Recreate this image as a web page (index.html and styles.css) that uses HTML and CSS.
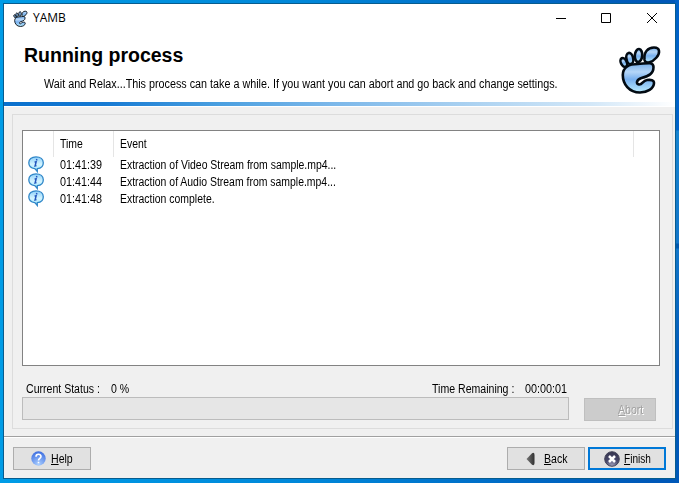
FILE: index.html
```html
<!DOCTYPE html>
<html lang="en">
<head>
<meta charset="utf-8">
<title>YAMB</title>
<link rel="stylesheet" href="styles.css">
</head>
<body>
<svg width="0" height="0" class="defs" aria-hidden="true">
  <defs>
    <linearGradient id="skin" x1="0" y1="0" x2="0" y2="1"><stop offset="0" stop-color="#74aeea"/><stop offset=".3" stop-color="#b5d6f8"/><stop offset=".55" stop-color="#78b0ef"/><stop offset="1" stop-color="#b9ecff"/></linearGradient>
    <linearGradient id="bubble" x1="0" y1="0" x2="0" y2="1"><stop offset="0" stop-color="#8ed0fa"/><stop offset=".5" stop-color="#d4f4ff"/><stop offset="1" stop-color="#9ce8ff"/></linearGradient>
    <radialGradient id="help" cx=".5" cy=".9" r=".9"><stop offset="0" stop-color="#a9ceff"/><stop offset="1" stop-color="#3c6de0"/></radialGradient>
    <radialGradient id="stop" cx=".5" cy=".95" r=".95"><stop offset="0" stop-color="#9c9cb8"/><stop offset=".5" stop-color="#48486a"/><stop offset="1" stop-color="#34344e"/></radialGradient>
    <linearGradient id="arrow"><stop offset="0" stop-color="#777"/><stop offset="1" stop-color="#303030"/></linearGradient>
    <symbol id="foot" viewBox="0 0 42 50">
      <g fill="url(#skin)" stroke="#020a12" stroke-width="2.6" stroke-linejoin="round">
        <path d="M25.500 16C24.500 8 29 3.500 35 3.500c6.500 0 6 6 2.500 10C33.500 18 27 21 25.500 16z"/>
        <ellipse cx="19.500" cy="11.500" rx="3.700" ry="6.500" transform="rotate(5 19.500 11.500)"/>
        <ellipse cx="10.800" cy="14.500" rx="3.400" ry="5.700" transform="rotate(-12 10.800 14.500)"/>
        <ellipse cx="4.800" cy="18.500" rx="2.900" ry="4.700" transform="rotate(-26 4.800 18.500)"/>
        <path d="M3.800 31C3.800 23 11 20 19 20c6 0 15.500-3.500 15.500 3 0 7-5 9-12 11-5 1.500-6 6-2.500 6.500s3.500-4 8-4.500c4-.5 7 0 7 3 0 5.500-7 9.500-14 9.500C10 48.500 3.800 40 3.800 31z"/>
      </g>
    </symbol>
    <symbol id="info" viewBox="0 0 17 17">
      <path d="M8 .9C3.500.9 .8 3.500 .8 6.700s2.500 5.400 6 5.900L9.300 15.500V12.700C13 12.400 15.300 10 15.300 6.700S12.500.9 8 .9z" fill="url(#bubble)" stroke="#2f86c8" stroke-width="1.300"/>
      <path d="M8.800 3l-.3 1.500M6.600 5.900l1.500-.1-1 4.200 1.400-.4" fill="none" stroke="#2356bd" stroke-width="1.500"/>
    </symbol>
  </defs>
</svg>
<main class="window">
  <header class="titlebar">
    <svg class="app-icon"><use href="#foot"/></svg>
    <span class="app-name">YAMB</span>
    <svg class="controls" viewBox="0 0 102 12" fill="none" stroke="#000"><path d="M0 6.500h10M45.500 1.500h9v9h-9zM91 1l10 10M101 1L91 11"/></svg>
  </header>
  <section class="banner">
    <div><h1>Running process</h1>
    <p>Wait and Relax...This process can take a while. If you want you can abort and go back and change settings.</p></div>
    <svg class="logo"><use href="#foot"/></svg>
  </section>
  <div class="stripe"></div>
  <section class="panel">
    <div class="log">
      <div class="row head"><span></span><span><b>Time</b></span><span><b>Event</b></span><span></span></div>
      <div class="row"><svg><use href="#info"/></svg><span class="time"><b>01:41:39</b></span><span><b>Extraction of Video Stream from sample.mp4...</b></span></div>
      <div class="row"><svg><use href="#info"/></svg><span class="time"><b>01:41:44</b></span><span><b>Extraction of Audio Stream from sample.mp4...</b></span></div>
      <div class="row"><svg><use href="#info"/></svg><span class="time"><b>01:41:48</b></span><span><b>Extraction complete.</b></span></div>
    </div>
    <div class="status"><span class="label"><b>Current Status :</b></span><span><b>0 %</b></span><span class="remaining"><b>Time Remaining :</b></span><span class="clock"><b>00:00:01</b></span></div>
    <div class="progress-row"><div class="progress"></div><button class="abort" disabled><b><u>A</u>bort</b></button></div>
  </section>
  <footer>
    <button class="help"><svg width="15" height="15" viewBox="0 0 15 15"><circle cx="7.500" cy="7.500" r="7.200" fill="url(#help)"/><path d="M5 5.700C5 2.500 10 2.500 10 5.400c0 2-2.500 1.800-2.500 4M7.500 10.800v1.500" fill="none" stroke="#fff" stroke-width="1.600"/></svg><b><u>H</u>elp</b></button>
    <button class="back"><svg width="9" height="14" viewBox="0 0 9 14"><path d="M.5 7L6 1.200Q8.500 0 8.500 3v8q0 3-2.500 1.800z" fill="url(#arrow)"/></svg><b><u>B</u>ack</b></button>
    <button class="finish"><svg width="16" height="16" viewBox="0 0 16 16"><circle cx="8" cy="8" r="7.300" fill="url(#stop)" stroke="#44445a"/><path d="M5 5l6 6M11 5l-6 6" stroke="#fff" stroke-width="2.500"/></svg><b><u>F</u>inish</b></button>
  </footer>
</main>
</body>
</html>
```
FILE: styles.css
```css
* { box-sizing: border-box; }
body {
  margin: 0;
  width: 679px;
  height: 483px;
  padding: 4px 4px 5px;
  overflow: hidden;
  background:
    linear-gradient(#0062c8 130px, #1583d0 131px, #1376c9 243px, #0058ae 244px 248px, #1376c9 249px, #0058b8 370px) right top / 4px 483px no-repeat,
    linear-gradient(90deg, #009ce6, #0087d9 45%, #0058b8 96%, #0058b8);
  font: 12px/16px "Liberation Sans", Arial, sans-serif;
  color: #000;
}
/* condensed label text */
b {
  display: inline-block;
  font-weight: normal;
  white-space: nowrap;
  transform: scaleX(.88);
  transform-origin: 0 50%;
}
.defs { position: absolute; }
.window {
  width: 671px;
  height: 474px;
  background: #f0f0f0;
  outline: 1px solid #075c8e;
  display: flex;
  flex-direction: column;
}
.titlebar {
  height: 28px;
  padding: 0 17px 0 9px;
  background: #fff;
  display: flex;
  align-items: center;
}
.app-icon { width: 15px; height: 17px; }
.app-name { margin-left: 5px; font: 12px/16px "Open Sans", sans-serif; }
.controls { width: 102px; height: 12px; margin-left: auto; }
.banner {
  height: 70px;
  background: #fff;
  display: flex;
  justify-content: space-between;
  padding: 12px 14px 0 20px;
}
.banner > div { width: 590px; }
h1 { margin: 0; font: bold 19.5px/22px "Liberation Sans", sans-serif; white-space: nowrap; }
p { margin: 10px 0 0 20px; line-height: 16px; white-space: nowrap; transform: scaleX(.898); transform-origin: 0 50%; }
.logo { width: 42px; height: 50px; flex: none; }
.stripe {
  height: 5px;
  border-bottom: 1px solid #fff;
  background: linear-gradient(90deg, #0970cd, #167ad3 15%, #4a9fe0 32%, #79b6e9 48%, #acd2f1 70%, #d4e8f8 88%, #fff);
}
.panel {
  height: 315px;
  margin: 7px 2px 0 8px;
  border: 1px solid #dcdcdc;
  padding: 15px 0 0 9px;
}
.log {
  width: 638px;
  height: 236px;
  background: #fff;
  border: 1px solid #828282;
}
.row { display: grid; grid-template-columns: 30px 60px 1fr; height: 17px; align-items: center; }
.row svg { width: 17px; height: 17px; margin-left: 5px; }
.row > span { padding-left: 7px; }
.row b { transform: scaleX(.87); }
.row .time b { transform: scaleX(.9); }
.head { grid-template-columns: 31px 60px 520px 1fr; height: 25px; align-items: stretch; line-height: 26px; }
.head > span { border-right: 1px solid #e5e5e5; padding-left: 6px; }
.head > span:last-child { border: 0; }
.status { height: 29px; padding: 14px 105px 0 4px; display: flex; line-height: 18px; }
.label { width: 85px; }
.remaining { width: 82px; margin-left: auto; }
.clock { width: 42px; margin-left: 11px; }
.clock b { transform: scaleX(.9); }
.progress-row { display: flex; gap: 15px; padding-top: 2px; }
.progress { width: 547px; height: 23px; background: #e6e6e6; border: 1px solid #bcbcbc; }
button {
  height: 23px;
  padding: 0;
  background: #e1e1e1;
  border: 1px solid #adadad;
  display: flex;
  align-items: center;
  font: inherit;
  color: #000;
}
.abort { width: 72px; margin: 1px 0 0; padding-left: 33px; background: #ccc; border-color: #bfbfbf; color: #a0a0a0; text-shadow: 1px 1px #fff; }
footer {
  flex: 1;
  margin-top: 7px;
  border-top: 1px solid #a0a0a0;
  box-shadow: inset 0 1px #fff;
  padding: 10px 9px 0;
  display: flex;
}
.help { width: 78px; padding-left: 17px; gap: 5px; }
.back { width: 78px; margin-left: auto; padding-left: 18px; gap: 9px; }
.finish { width: 78px; margin-left: 3px; padding-left: 14px; gap: 4px; border: 2px solid #0078d7; }
.finish b { transform: scaleX(.84); }
```
